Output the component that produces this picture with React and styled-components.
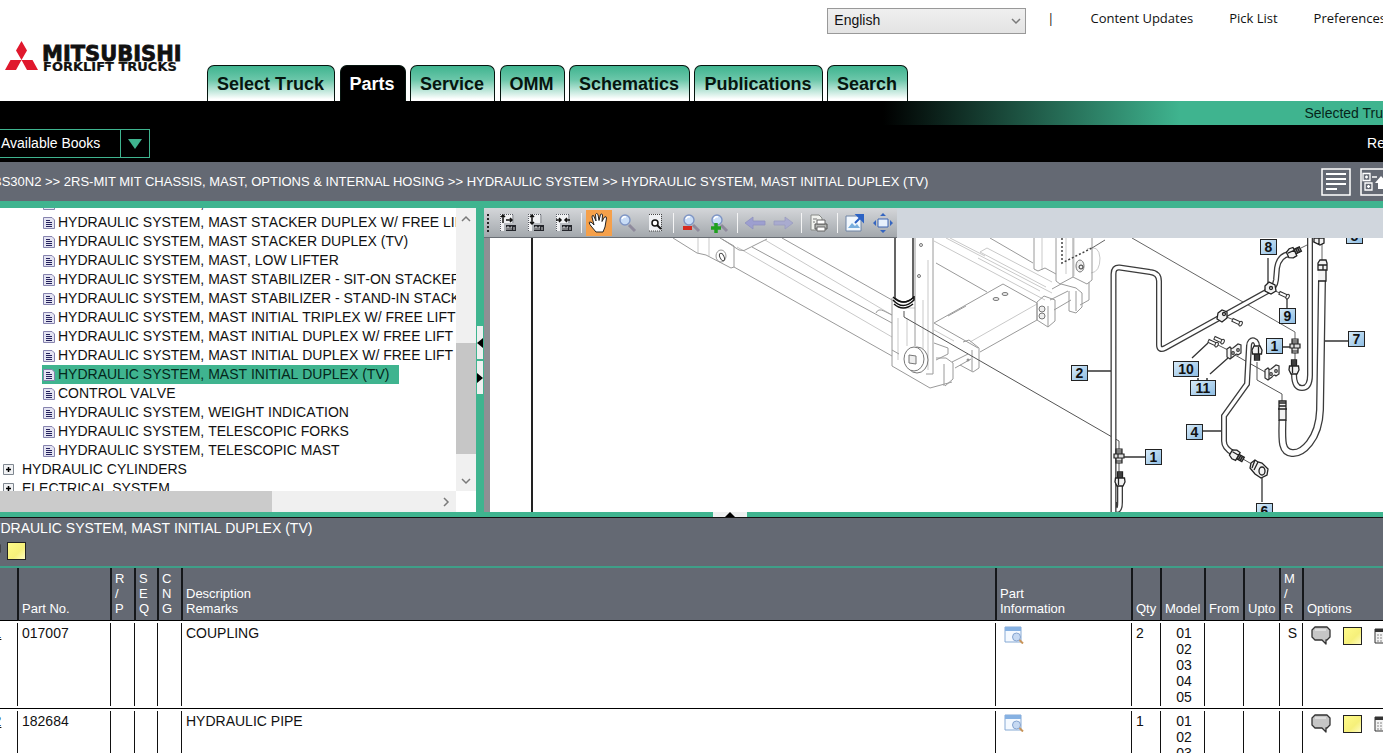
import styled, { createGlobalStyle, css } from "styled-components";

const TABS = [
  "Select Truck",
  "Parts",
  "Service",
  "OMM",
  "Schematics",
  "Publications",
  "Search",
];

const TREE = [
  { label: "HYDRAULIC SYSTEM, MAST STACKER DUPLEX W/ FREE LIFT" },
  { label: "HYDRAULIC SYSTEM, MAST STACKER DUPLEX W/ FREE LIFT" },
  { label: "HYDRAULIC SYSTEM, MAST STACKER DUPLEX (TV)" },
  { label: "HYDRAULIC SYSTEM, MAST, LOW LIFTER" },
  { label: "HYDRAULIC SYSTEM, MAST STABILIZER - SIT-ON STACKER" },
  { label: "HYDRAULIC SYSTEM, MAST STABILIZER - STAND-IN STACKER" },
  { label: "HYDRAULIC SYSTEM, MAST INITIAL TRIPLEX W/ FREE LIFT" },
  { label: "HYDRAULIC SYSTEM, MAST INITIAL DUPLEX W/ FREE LIFT" },
  { label: "HYDRAULIC SYSTEM, MAST INITIAL DUPLEX W/ FREE LIFT" },
  { label: "HYDRAULIC SYSTEM, MAST INITIAL DUPLEX (TV)", selected: true },
  { label: "CONTROL VALVE" },
  { label: "HYDRAULIC SYSTEM, WEIGHT INDICATION" },
  { label: "HYDRAULIC SYSTEM, TELESCOPIC FORKS" },
  { label: "HYDRAULIC SYSTEM, TELESCOPIC MAST" },
  { label: "HYDRAULIC CYLINDERS", branch: true },
  { label: "ELECTRICAL SYSTEM", branch: true },
];

const PARTS = [
  {
    id: 1,
    partNo: "017007",
    name: "COUPLING",
    qty: 2,
    models: ["01", "02", "03", "04", "05"],
    mr: "S",
  },
  {
    id: 2,
    partNo: "182684",
    name: "HYDRAULIC PIPE",
    qty: 1,
    models: ["01", "02", "03", "04", "05"],
    mr: "",
  },
];

const COLUMNS = [
  { lines: ["Ref", "No"], width: 43 },
  { lines: ["Part No."], width: 93 },
  { lines: ["R", "/", "P"], width: 24 },
  { lines: ["S", "E", "Q"], width: 23 },
  { lines: ["C", "N", "G"], width: 24 },
  { lines: ["Description", "Remarks"] },
  { lines: ["Part", "Information"], width: 136 },
  { lines: ["Qty"], width: 29 },
  { lines: ["Model"], width: 44 },
  { lines: ["From"], width: 39 },
  { lines: ["Upto"], width: 36 },
  { lines: ["M", "/", "R"], width: 23 },
  { lines: ["Options"], width: 159 },
];

const CALLOUTS = [
  { n: "8", x: 1260, y: 239 },
  { n: "5", x: 1346, y: 228 },
  { n: "9", x: 1279, y: 308 },
  { n: "7", x: 1348, y: 331 },
  { n: "1", x: 1266, y: 338 },
  { n: "10", x: 1173, y: 361 },
  { n: "2", x: 1071, y: 365 },
  { n: "11", x: 1190, y: 380 },
  { n: "4", x: 1186, y: 424 },
  { n: "1", x: 1145, y: 449 },
  { n: "6", x: 1256, y: 503 },
];

/* ---------- icons ---------- */

const Logo = () => (
  <svg width="184" height="34" viewBox="4 39 184 34" role="img" aria-label="Mitsubishi Forklift Trucks">
    <path
      d="M21.500 41l5.500 9.500-5.500 9.500-5.500-9.500zM21.500 60l-5.500 10H5l5.500-10zM21.500 60l5.500 10h11l-5.500-10z"
      fill="#e0182d"
    />
    <g fontFamily='"DejaVu Sans", sans-serif' fontWeight="bold" fill="#111" stroke="#111">
      <text x="42" y="61" fontSize="21" strokeWidth="0.8">
        MITSUBISHI
      </text>
      <text x="43" y="71" fontSize="13" strokeWidth="0.2">
        FORKLIFT TRUCKS
      </text>
    </g>
  </svg>
);

const Chevron = ({ d }) => (
  <svg width="10" height="10" viewBox="0 0 10 10" fill="none" stroke="#7a7a7a" strokeWidth="1.500">
    <path d={d} />
  </svg>
);

const DocIcon = () => (
  <svg width="12" height="12" viewBox="0 0 12 12">
    <path d="M.5.5h8.500l2.500 2.500v8.500H.5z" fill="#e4e4f2" stroke="#8683ae" />
    <path d="M3 3.500h4M3 5.500h6M3 7.500h6M3 9.500h6" stroke="#24215c" />
  </svg>
);

const PlusIcon = () => (
  <svg width="12" height="12" viewBox="0 0 12 12">
    <path d="M.5.5h10v10H.5z" fill="#f1f2f4" stroke="#7f8790" />
    <path d="M3 5.500h5M5.500 3v5" stroke="#000" strokeWidth="1.500" />
  </svg>
);

const TextIcon = () => (
  <svg width="30" height="28" viewBox="0 0 30 28" fill="none" stroke="#fff">
    <path d="M1 1h28v26H1z" strokeWidth="1.500" />
    <path d="M5 6h20M5 11h20M5 16h20M5 21h11" strokeWidth="2" />
  </svg>
);

const HierarchyIcon = () => (
  <svg width="30" height="28" viewBox="0 0 30 28" fill="none" stroke="#fff">
    <path d="M1 1h28v26H1z" strokeWidth="1.500" />
    <path
      d="M3 5.500h7v7H3zM5 15h7v7H5zM6.500 7.500v3M5 9h3M8.500 17v3M7 18.500h3M12 9h5"
      strokeWidth="1.300"
    />
    <path d="M15 15l6-7 6 7h-3v6h-6v-6z" fill="#fff" stroke="none" />
  </svg>
);

const InfoIcon = () => (
  <svg width="20" height="18" viewBox="0 0 20 18">
    <path d="M1 1h16v15H1z" fill="#f4f9ff" stroke="#86a9d4" />
    <path d="M1 1h16v4H1z" fill="#86b1e2" />
    <circle cx="12.500" cy="11" r="4" fill="#c6d9f2" stroke="#86a4cf" />
    <path d="M15.500 14l3.500 3.500" stroke="#c9955a" strokeWidth="2" />
  </svg>
);

const CommentIcon = () => (
  <svg width="20" height="19" viewBox="0 0 20 19">
    <path
      d="M4 1h12l3 3v7l-3 3h-1v4l-4-4H4l-3-3V4z"
      fill="#c6c6c6"
      stroke="#333"
      strokeWidth="1.300"
      strokeLinejoin="round"
    />
    <path d="M4 4h11" stroke="#dedede" strokeWidth="2" />
  </svg>
);

const CalendarIcon = () => (
  <svg width="18" height="18" viewBox="0 0 18 18">
    <path d="M1 2h16v14H1z" fill="#f3f3f3" stroke="#333" />
    <path d="M1 2h16v3H1z" fill="#333" />
    <path d="M3 8h12M3 11h12M3 14h12" stroke="#888" strokeDasharray="2 1" />
  </svg>
);

const FitPage = ({ arrows }) => (
  <>
    <path d="M5 3h12v9H9v8H5z" fill="#f0f1f3" />
    <path d="M5 3.500h13v8M5.500 3v17" fill="none" stroke="#5b5e66" strokeDasharray="1 1" />
    <path d={arrows} stroke="#111" strokeWidth="1.500" fill="none" />
    <path d="M11 14h10v6H11z" fill="#24262c" />
    <path d="M12 19v-3h2v3M16 19v-3h1M19 19v-3" stroke="#fff" strokeWidth="0.800" fill="none" />
  </>
);

const Lens = () => (
  <>
    <path d="M14 14l6 6" stroke="#8f8a9c" strokeWidth="3" />
    <circle cx="10" cy="9" r="5" fill="#c8dcf6" stroke="#7f95c4" strokeWidth="1.400" />
    <path d="M7 8q1-3 4-2" stroke="#fff" strokeWidth="1.500" fill="none" />
  </>
);

const TOOLS = [
  { name: "Fit page", art: <FitPage arrows="M8 4v8M6 6l2-2 2 2M11 9h6M15 7l2 2-2 2" /> },
  { name: "Fit height", art: <FitPage arrows="M9 4v9M7 6l2-2 2 2M7 11l2 2 2-2" /> },
  { name: "Fit width", art: <FitPage arrows="M5 9h5M8 7l2 2-2 2M19 9h-5M16 7l-2 2 2 2" /> },
  null,
  {
    name: "Pan",
    active: true,
    art: (
      <path
        d="M9 21l-5-6q-3-4-1-4 2 0 4 3L5 6q0-2 1.500-1.500L9 10 8.500 3.500Q9.500 1.500 11 3.500l1 6 1.500-6q1.500-1.500 2 .500l-.500 6.500L17.500 6q2-1 2 1L18 16l-2 5z"
        fill="#fff"
        stroke="#222"
      />
    ),
  },
  { name: "Zoom", art: <Lens /> },
  {
    name: "Zoom area",
    art: (
      <>
        <path d="M6 3h12v17H6z" fill="#eef0f3" />
        <path d="M6 3.500h13M18.500 3v17M6 20h12" stroke="#444" strokeDasharray="1 1" />
        <circle cx="12" cy="12" r="3" fill="#fff" stroke="#111" strokeWidth="1.500" />
        <path d="M14 14l4 4" stroke="#111" strokeWidth="2" />
      </>
    ),
  },
  null,
  { name: "Zoom out", art: <><Lens /><path d="M4 17h9" stroke="#d62a1e" strokeWidth="4" /></> },
  {
    name: "Zoom in",
    art: <><Lens /><path d="M4 17h10M9 12v10" stroke="#1fa01f" strokeWidth="3.500" /></>,
  },
  null,
  {
    name: "Back",
    art: <path d="M2 12l8-6v4h12v4H10v4z" fill="#9d9fd0" stroke="#8f92bf" strokeWidth="0.800" />,
  },
  {
    name: "Forward",
    art: <path d="M22 12l-8-6v4H3v4h11v4z" fill="#a9abcf" stroke="#9a9dbf" strokeWidth="0.800" />,
  },
  null,
  {
    name: "Print",
    art: (
      <>
        <path d="M4 4h8l3 3v12H4z" fill="#f0f2ee" stroke="#878a87" />
        <path d="M8 13h12v5H8z" fill="#b6b8b5" stroke="#555" />
        <path d="M10 9h8v4h-8zM10 16h8v4h-8z" fill="#fff" stroke="#666" />
        <path d="M6 8h4M6 11h2" stroke="#777" />
      </>
    ),
  },
  null,
  {
    name: "Open image",
    art: (
      <>
        <path d="M3 5h15v15H3z" fill="#f1f7fd" stroke="#6f84a5" />
        <path d="M5 17l4-5 3 3 2-2 3 4z" fill="#79aedd" />
        <path d="M12 12l6-6M14 4h6v6z" fill="#2c62c4" stroke="#2c62c4" strokeWidth="2" />
      </>
    ),
  },
  {
    name: "Full screen",
    art: (
      <>
        <path d="M7 8h10v8H7z" fill="#e7f0fb" stroke="#3f66b3" />
        <path d="M12 2l3 3H9zM12 22l3-3H9zM2 12l3-3v6zM22 12l-3-3v6z" fill="#3565c0" />
      </>
    ),
  },
];

/* ---------- schematic ---------- */

const Pipe = ({ d, width = 6 }) => (
  <>
    <path d={d} fill="none" stroke="#3b3b3b" strokeWidth={width} />
    <path d={d} fill="none" stroke="#fff" strokeWidth={width - 2.6} />
  </>
);

const Fitting = ({ x, y, angle = 0 }) => (
  <g transform={`translate(${x} ${y}) rotate(${angle})`} fill="#f2f2f2" stroke="#222" strokeWidth="1.300">
    <path d="M-2.500-7h5v6h-5z" fill="#999" />
    <path d="M-2.500-5h5M-2.500-3h5" />
    <path d="M-4.500-1h9l.500 4-2 4h-6l-2-4zM-1.500-1v7" />
  </g>
);

const Coupling = ({ x, y }) => (
  <g transform={`translate(${x} ${y})`} fill="#ddd" stroke="#222" strokeWidth="1.200">
    <path d="M-3-7h6v14h-6z" />
    <path d="M-3-5h6M-3-3h6M-3 5h6" />
    <path d="M-5-2h10v4H-5zM-1-2v4" />
  </g>
);

const Bolt = ({ x, y }) => (
  <g transform={`translate(${x} ${y}) rotate(25)`} fill="#fff" stroke="#333">
    <path d="M-5-1.500H4v3h-9z" />
    <ellipse cx="4" cy="0" rx="1.500" ry="2.500" />
  </g>
);

const Bracket = ({ x, y }) => (
  <g transform={`translate(${x} ${y})`} fill="#f5f5f5" stroke="#333" strokeWidth="1.200">
    <path d="M-7-2l3-2q1 2 3 1l5-4 3 1v8l-3 2q-2-2-4 1l-4 3-3-2z" />
    <path d="M-3-3v10" />
    <circle cx="-1" cy="2" r="1.300" />
    <circle cx="4" cy="-1" r="1.300" />
  </g>
);

const Schematic = () => (
  <svg width="973" height="274" viewBox="490 238 973 274" role="img" aria-label="Hydraulic system diagram">
    <defs>
      <linearGradient id="callout" x1="0" y1="0" x2="1" y2="1">
        <stop offset="0" stopColor="#d9ecfa" />
        <stop offset="1" stopColor="#8dbce2" />
      </linearGradient>
    </defs>
    <path d="M532 238v274" stroke="#222" strokeWidth="2" />

    {/* chassis legs and mast */}
    <g fill="none" stroke="#c9c9c9">
      <path d="M698 238v15M709 238v18M737 247L892 337M765 240L892 315M898 318v42M907 318v28" />
      <path d="M934 241L1045 300M946 238L1052 293M980 252L1046 287M978 258L1040 291M950 238L985 256M980 252l7-4L1052 282" />
      <path d="M1042 238v32M1066 238v36M1074 238v38" />
      <path d="M934 330l20 11M1037 304L970 342" />
      <path d="M1087 249q12-5 13 9 0 14-9 15" />
      <path d="M923 300v60M928 260v110M904 308h11" />
    </g>
    <g fill="none" stroke="#9a9a9a">
      <path d="M673 238L697 253 706 255 731 268 734 267V246L720 238M734 267L892 356" />
      <path d="M722 239L739 250Q744 252 749 248L767 239M752 247L892 323M782 238L892 300" />
      <path d="M876 313q2-5 8-2l8 4" />
      <ellipse cx="721" cy="256" rx="5" ry="6" />
      <ellipse cx="722" cy="257" rx="2" ry="4" stroke="#444" transform="rotate(-25 722 257)" />
      <path d="M892 298V366L930 388 952 382M915 238v108M933 238V374L926 374M936 263L987 292M990 238L1033 263" />
      <path d="M892 350l7 4M934 323L1003 284 1037 303V320L980 352M934 323L978 348M948 316l18-10" />
      <path d="M963 342l6-2 10 8v20l-6 4-13-7M972 350v21M934 343l14 5v6l-12 6M952 362l16-8M955 368l16-9" />
      <path d="M936 358h10l7 5v16l-8 7M944 364v22" />
      <path d="M1034 238v31l4 2 7-3 11 6M1056 238v43l4 3 13-7V238M1073 277l14 7 5-4v-42" />
      <path d="M1089 282v18l-9 5" />
      <path d="M1037 302l7-6 11 4v21l-7 6-11-7zM1048 306v21M1050 300l18-9M1054 310l17-10" />
      <path d="M1052 289l9-5 15 4 6 5v14l-6 6-7-2v-20M1076 291v20" />
    </g>
    <g fill="#eee" stroke="#777">
      <ellipse cx="996" cy="299" rx="3" ry="1.500" />
      <ellipse cx="1005" cy="294" rx="3" ry="1.500" />
      <circle cx="1042" cy="309" r="3" />
      <circle cx="1042" cy="316" r="3" />
      <ellipse cx="1080" cy="266" rx="4" ry="6" />
      <circle cx="1081" cy="267" r="2" stroke="#333" />
      <circle cx="921" cy="245" r="1.500" />
      <circle cx="919" cy="276" r="1.500" />
      <circle cx="968" cy="360" r="1" />
      <ellipse cx="917" cy="360" rx="11" ry="13" fill="#fff" />
      <ellipse cx="914" cy="359" rx="10" ry="12" fill="#fff" />
      <path d="M909 355l7 1v8l-7-1z" />
    </g>
    <path d="M895 238v60q9 8 18 0v-60" fill="#fff" stroke="#333" strokeWidth="1.500" />
    <path d="M893 297q10 10 21 0M893 300q10 11 21 0v-4M894 304q9 8 19 0" fill="none" stroke="#111" strokeWidth="1.500" />
    <path d="M904 311v6L1119 441v8" fill="none" stroke="#555" />
    <path d="M1062 238v25l30-15" fill="none" stroke="#444" strokeWidth="1.500" strokeDasharray="2 2" />
    <path d="M1092 248l13-8M1132 238L1295 332v8M1301 248l16-8M1322 243v20" fill="none" stroke="#666" />

    {/* hoses and pipes */}
    <g fill="none" stroke="#555">
      <path d="M1119 462v12M1295 352v10M1257 362v18l25 14v8M1235 355l30 17M1218 345l10 5M1243 459l12 7M1270 289l10 4M1224 316l10 4" />
    </g>
    <Pipe d="M1120 484v18q0 8-3 8t-3-8" />
    <Pipe d="M1113.500 512V274q0-7 6-6.500L1150 272q9 1 9 9v64q0 6 6 3L1268 291q7-3 8-11l1-12q2-13 13-14" />
    <Pipe d="M1310 238v137q0 13-8 13t-8-14" />
    <Pipe width={8} d="M1322 280L1320 410C1319 440 1302 454 1292 453 1281 452 1282 440 1282.500 420" />
    <Pipe d="M1257 352C1259 337 1249 338 1249 346L1247 384 1224 416V441q0 7 9 12" />
    <Fitting x={1120} y={479} />
    <Fitting x={1294} y={252} angle={65} />
    <Fitting x={1294} y={367} />
    <Fitting x={1257} y={353} angle={180} />
    <Fitting x={1237} y={456} angle={120} />
    <Coupling x={1119} y={456} />
    <Coupling x={1295} y={346} />
    <g fill="#f2f2f2" stroke="#222" strokeWidth="1.300">
      <path d="M1318 263l2-3h6l1 3v7h-9zM1318 270h8v11h-8M1318 265h9M1323 265v5" />
      <path d="M1279 401h7v19h-7zM1279 403h7M1279 406h7M1278 409h9" />
      <path d="M1314 238h10v5l-4 2-6-3zM1319 238v6" />
      <path d="M1251 463l4-3 3 2 4 1 6 6-1 6-6 3-6-4-5-6z" />
      <path d="M1255 460l-3 8M1258 462l-4 8" />
      <ellipse cx="1262" cy="471" rx="3" ry="4" />
      <path d="M1265 286l4-4 6 3 1 6-5 3-6-3zM1218 313l4-3 5 2v6l-5 4-5-3z" />
      <circle cx="1271" cy="288" r="1.500" />
      <circle cx="1224" cy="314" r="1.500" />
    </g>
    <Bolt x={1284} y={295} />
    <Bolt x={1237} y={322} />
    <Bolt x={1219} y={340} />
    <Bolt x={1213} y={343} />
    <Bracket x={1234} y={351} />
    <Bracket x={1272} y={372} />
    <path
      d="M1268 258v25M1287 299v9M1325 341h23M1283 347h7M1192 358l16-15M1210 374l18-16M1203 431h18M1088 371h23M1124 457h21M1262 477v25M1197 379h2M1206 379h2"
      stroke="#333"
      strokeWidth="1.300"
      fill="none"
    />
    {CALLOUTS.map(({ n, x, y }) => {
      const width = n.length > 1 ? 25 : 16;
      return (
        <g key={`${n}-${x}`}>
          <rect x={x + 0.5} y={y + 0.5} width={width} height="15" fill="url(#callout)" stroke="#222" />
          <CalloutText x={x + width / 2 + 0.5} y={y + 13}>
            {n}
          </CalloutText>
        </g>
      );
    })}
  </svg>
);

/* ---------- page ---------- */

const App = () => (
  <>
    <GlobalStyle />
    <Viewport>
      <Shell>
        <Header>
          <LogoBox>
            <Logo />
          </LogoBox>
          <HeaderMain>
            <TopLinks>
              <SelectWrapper>
                <LanguageSelect aria-label="Language" defaultValue="English">
                  <option>English</option>
                </LanguageSelect>
                <Chevron d="M1 3l4 4 4-4" />
              </SelectWrapper>
              <Divider>|</Divider>
              <a href="#updates">Content Updates</a>
              <a href="#picklist">Pick List</a>
              <a href="#preferences">Preferences</a>
            </TopLinks>
            <Tabs>
              {TABS.map((tab) => [
                <Tab key={tab} href={`#${tab}`} $active={tab === "Parts"}>
                  {tab}
                </Tab>,
                " ",
              ])}
            </Tabs>
          </HeaderMain>
        </Header>

        <TruckBar>Selected Truck</TruckBar>
        <BooksBar>
          <BooksButton>
            <span>Available Books</span>
            <i>
              <svg width="14" height="10" viewBox="0 0 14 10">
                <path d="M0 0h14L7 10z" fill="#3fb48f" />
              </svg>
            </i>
          </BooksButton>
          <RightText>Re</RightText>
        </BooksBar>

        <Breadcrumb>
          <p>
            BS30N2 &gt;&gt; 2RS-MIT MIT CHASSIS, MAST, OPTIONS &amp; INTERNAL HOSING &gt;&gt; HYDRAULIC
            SYSTEM &gt;&gt; HYDRAULIC SYSTEM, MAST INITIAL DUPLEX (TV)
          </p>
          <IconButton aria-label="List view">
            <TextIcon />
          </IconButton>
          <IconButton aria-label="Up one level">
            <HierarchyIcon />
          </IconButton>
        </Breadcrumb>

        <Workspace>
          <TreePanel>
            <TreeList>
              {TREE.map(({ label, branch, selected }, i) => (
                <TreeItem key={i} $branch={branch} $selected={selected}>
                  <a href="#node">
                    {branch ? <PlusIcon /> : <DocIcon />}
                    {label}
                  </a>
                </TreeItem>
              ))}
            </TreeList>
            <VerticalBar>
              <Chevron d="M1 7l4-4 4 4" />
              <VerticalThumb />
              <Chevron d="M1 3l4 4 4-4" />
            </VerticalBar>
            <HorizontalBar>
              <HorizontalThumb />
              <Chevron d="M3 1l4 4-4 4" />
            </HorizontalBar>
          </TreePanel>
          <Splitter>
            <SplitButton aria-label="Collapse tree">
              <svg width="6" height="10" viewBox="0 0 6 10">
                <path d="M6 0v10L0 5z" />
              </svg>
            </SplitButton>
            <SplitButton aria-label="Expand tree">
              <svg width="6" height="10" viewBox="0 0 6 10">
                <path d="M0 0v10l6-5z" />
              </svg>
            </SplitButton>
          </Splitter>
          <Viewer>
            <ToolStrip>
              <Toolbar>
                <Grip />
                {TOOLS.map((tool, i) =>
                  tool ? (
                    <ToolButton key={tool.name} aria-label={tool.name} $active={tool.active}>
                      <svg width="24" height="24" viewBox="0 0 24 24" fill="none">
                        {tool.art}
                      </svg>
                    </ToolButton>
                  ) : (
                    <ToolSeparator key={i} />
                  )
                )}
              </Toolbar>
            </ToolStrip>
            <Canvas>
              <Schematic />
            </Canvas>
          </Viewer>
        </Workspace>

        <BottomSplitter>
          <button aria-label="Expand parts list">
            <svg width="10" height="5" viewBox="0 0 10 5">
              <path d="M0 5h10L5 0z" />
            </svg>
          </button>
        </BottomSplitter>

        <ListHeader>
          <h2>HYDRAULIC SYSTEM, MAST INITIAL DUPLEX (TV)</h2>
          <ListActions>
            <IconButton aria-label="Comments">
              <CommentIcon />
            </IconButton>
            <NoteButton aria-label="Add note" />
          </ListActions>
        </ListHeader>

        <PartsTable>
          <colgroup>
            {COLUMNS.map(({ lines, width }) => (
              <col key={lines.join("")} width={width} />
            ))}
          </colgroup>
          <thead>
            <tr>
              {COLUMNS.map(({ lines }) => (
                <th key={lines.join("")}>
                  {lines.map((line) => (
                    <div key={line}>{line}</div>
                  ))}
                </th>
              ))}
            </tr>
          </thead>
          <tbody>
            {PARTS.map(({ id, partNo, name, qty, models, mr }) => (
              <tr key={id}>
                <Cell $center>
                  <a href="#ref">{id}</a>
                </Cell>
                <Cell>{partNo}</Cell>
                <Cell />
                <Cell />
                <Cell />
                <Cell>{name}</Cell>
                <Cell>
                  <CellIcons>
                    <IconButton aria-label="Part information">
                      <InfoIcon />
                    </IconButton>
                  </CellIcons>
                </Cell>
                <Cell>{qty}</Cell>
                <Cell $center>
                  {models.map((model) => (
                    <div key={model}>{model}</div>
                  ))}
                </Cell>
                <Cell />
                <Cell />
                <Cell $center>{mr}</Cell>
                <Cell>
                  <CellIcons>
                    <IconButton aria-label="Comment">
                      <CommentIcon />
                    </IconButton>
                    <NoteButton aria-label="Note" />
                    <IconButton aria-label="History">
                      <CalendarIcon />
                    </IconButton>
                  </CellIcons>
                </Cell>
              </tr>
            ))}
          </tbody>
        </PartsTable>
      </Shell>
    </Viewport>
  </>
);

export default App;

const GlobalStyle = createGlobalStyle`
  * {
    box-sizing: border-box;
  }

  body {
    background-color: #fff;
    color: #111;
    font-family: "Liberation Sans", Arial, sans-serif;
    font-size: 14px;
    margin: 0;
  }

  a {
    color: inherit;
    text-decoration: none;
  }

  button {
    background: none;
    border: 0;
    color: inherit;
    cursor: pointer;
    font: inherit;
    padding: 0;
  }

  svg {
    display: block;
    flex: none;
  }
`;

const Viewport = styled.div`
  height: 100vh;
  overflow: hidden;
`;

/* the page is wider than the window and runs out on both sides */
const Shell = styled.div`
  margin: 0 -80px 0 -24px;
`;

const Header = styled.header`
  display: flex;
  height: 101px;
`;

const LogoBox = styled.div`
  flex: none;
  padding: 39px 0 0 28px;
  width: 231px;
`;

const HeaderMain = styled.div`
  display: flex;
  flex: 1;
  flex-direction: column;
  justify-content: space-between;
`;

const TopLinks = styled.div`
  align-items: center;
  display: flex;
  font-family: "Open Sans", sans-serif;
  font-size: 13px;
  gap: 36px;
  justify-content: flex-end;
  padding: 8px 77px 0 0;

  a {
    margin-top: -6px;
  }
`;

const SelectWrapper = styled.div`
  align-items: center;
  display: flex;
  margin-right: -10px;

  svg {
    margin-left: -15px;
    pointer-events: none;
  }
`;

const LanguageSelect = styled.select`
  appearance: none;
  background: linear-gradient(#efefef, #e3e3e3);
  border: 1px solid #999;
  border-radius: 0;
  color: #111;
  font: 14px "Liberation Sans", Arial, sans-serif;
  height: 26px;
  padding: 0 20px 3px 6px;
  width: 199px;
`;

const Divider = styled.span`
  margin-top: -6px;
`;

const Tabs = styled.nav`
  font-kerning: none;
  font-size: 16px;
  height: 36px;
  line-height: 36px;
  white-space: nowrap;
`;

const Tab = styled.a`
  background: linear-gradient(#3fb48f, #6cc7aa 40%, #fff 95%);
  border: 1px solid #06150f;
  border-bottom: 0;
  border-radius: 7px 7px 0 0;
  color: #06150f;
  display: inline-block;
  font-size: 18px;
  font-weight: bold;
  height: 36px;
  padding: 0 10px 0 9px;
  vertical-align: top;

  ${({ $active }) =>
    $active &&
    css`
      background: #000;
      color: #fff;
    `}
`;

const TruckBar = styled.div`
  background: linear-gradient(90deg, #000 61%, #3fb48f 81%);
  color: #06251a;
  display: flex;
  justify-content: flex-end;
  line-height: 24px;
  padding-right: 66px;
`;

const BooksBar = styled.div`
  align-items: flex-start;
  background-color: #000;
  color: #fff;
  display: flex;
  height: 37px;
  justify-content: space-between;
  padding: 4px 78px 4px 0;
`;

const BooksButton = styled.button`
  border: 1px solid #3fb48f;
  display: flex;
  height: 29px;
  line-height: 27px;
  width: 174px;

  span {
    flex: 1;
    padding-left: 24px;
    text-align: left;
  }

  i {
    align-items: center;
    border-left: 1px solid #3fb48f;
    display: flex;
    height: 27px;
    justify-content: center;
    width: 29px;
  }
`;

const RightText = styled.span`
  line-height: 29px;
`;

const Breadcrumb = styled.div`
  align-items: center;
  background-color: #646973;
  border-bottom: 7px solid #3fb48f;
  color: #fff;
  display: flex;
  font-size: 13px;
  gap: 9px;
  height: 46px;
  padding-right: 73px;

  p {
    flex: 1;
    margin: 0;
    padding-left: 17px;
    white-space: nowrap;
  }
`;

const IconButton = styled.button`
  display: block;
  flex: none;
`;

const Workspace = styled.main`
  display: flex;
  height: 304px;
`;

const TreePanel = styled.section`
  display: grid;
  flex: none;
  grid-template-columns: 1fr 20px;
  grid-template-rows: 1fr 21px;
  width: 500px;
`;

const TreeList = styled.ul`
  height: 283px;
  list-style: none;
  margin: 0;
  overflow: hidden;
  padding: 0;

  /* scrolled part of the list */
  li:first-child {
    margin-top: -14px;
  }
`;

const TreeItem = styled.li`
  display: flex;
  font-kerning: none;
  line-height: 19px;
  padding-left: ${({ $branch }) => ($branch ? "26px" : "66px")};
  white-space: nowrap;

  a {
    align-items: center;
    background-color: ${({ $selected }) => ($selected ? "#3fb48f" : "transparent")};
    color: ${({ $selected }) => ($selected ? "#04271b" : "#111")};
    display: flex;
    gap: ${({ $branch }) => ($branch ? "7px" : "3px")};
    padding: 0 ${({ $selected }) => ($selected ? "10px" : "0")} 0 1px;
  }
`;

const VerticalBar = styled.div`
  align-items: center;
  background-color: #f0f0f0;
  display: flex;
  flex-direction: column;
  padding: 6px 0 5px;
`;

const VerticalThumb = styled.div`
  background-color: #c6c6c6;
  height: 111px;
  margin: 119px 0 auto;
  width: 20px;
`;

const HorizontalBar = styled.div`
  align-items: center;
  background-color: #f0f0f0;
  display: flex;
  justify-content: space-between;
  padding-right: 5px;
`;

const HorizontalThumb = styled.div`
  background-color: #cbcbcb;
  height: 100%;
  width: 296px;
`;

const Splitter = styled.div`
  align-items: center;
  background-color: #3fb48f;
  display: flex;
  flex: none;
  flex-direction: column;
  gap: 2px;
  justify-content: center;
  width: 8px;
`;

const SplitButton = styled.button`
  align-items: center;
  background-color: #eef0f0;
  display: flex;
  height: 33px;
  justify-content: center;
  width: 6px;
`;

const Viewer = styled.section`
  flex: 1;
  min-width: 0;
  overflow: hidden;
`;

const ToolStrip = styled.div`
  background-color: #d0d6dd;
  display: flex;
  height: 30px;
`;

const Toolbar = styled.div`
  align-items: center;
  background: linear-gradient(#d4d6d9, #a3a8ad);
  border-bottom: 1px solid #6a6f75;
  display: flex;
  padding-left: 3px;
`;

const Grip = styled.div`
  border-left: 2px dotted #222;
  height: 18px;
  width: 6px;
`;

const ToolButton = styled.button`
  align-items: center;
  background-color: ${({ $active }) => ($active ? "#f5a04a" : "transparent")};
  background-clip: content-box;
  display: flex;
  height: 26px;
  justify-content: center;
  padding: 0 1px;
  width: 28px;
`;

const ToolSeparator = styled.div`
  background: linear-gradient(#f4f4f4, #f4f4f4) center / 1px 100% no-repeat;
  height: 20px;
  width: 8px;
`;

const Canvas = styled.div`
  background-color: #fff;
  border-left: 6px solid #8e9094;
`;

const CalloutText = styled.text`
  fill: #111;
  font-family: "Liberation Sans", Arial, sans-serif;
  font-size: 14px;
  font-weight: bold;
  text-anchor: middle;
`;

const BottomSplitter = styled.div`
  background-color: #3fb48f;
  border-bottom: 1px solid #111;
  display: flex;
  height: 6px;
  justify-content: center;
  padding-left: 20px;

  button {
    background-color: #eef0f0;
    display: flex;
    justify-content: center;
    height: 5px;
    width: 34px;
  }
`;

const ListHeader = styled.div`
  background-color: #646973;
  border-bottom: 2px solid #3f9f88;
  color: #fff;
  height: 50px;

  h2 {
    font-size: 14px;
    font-weight: normal;
    font-kerning: none;
    line-height: 20px;
    margin: 0;
    padding-left: 5px;
  }
`;

const ListActions = styled.div`
  align-items: center;
  display: flex;
  gap: 6px;
  padding: 3px 0 0 5px;
`;

const NoteButton = styled.button`
  background: linear-gradient(135deg, #fffb8a, #f6f07a 60%, #fffcc0);
  border: 1px solid #222;
  flex: none;
  height: 18px;
  width: 19px;
`;

const PartsTable = styled.table`
  border-collapse: separate;
  border-spacing: 0;
  table-layout: fixed;
  width: 100%;

  th {
    background-color: #646973;
    border-bottom: 1px solid #000;
    border-right: 2px solid #15171a;
    color: #fff;
    font-size: 13px;
    font-weight: normal;
    line-height: 15px;
    padding: 3px 0 4px 3px;
    text-align: left;
    vertical-align: bottom;
  }
`;

const Cell = styled.td`
  background: linear-gradient(#111, #111) right 1px center / 1px calc(100% - 4px) no-repeat;
  border-bottom: 1px solid #000;
  line-height: 16px;
  padding: 4px 3px 3px;
  text-align: ${({ $center }) => ($center ? "center" : "left")};
  vertical-align: top;

  a {
    text-decoration: underline;
  }
`;

const CellIcons = styled.div`
  align-items: center;
  display: flex;
  gap: 12px;
  padding: 1px 0 0 4px;
`;
